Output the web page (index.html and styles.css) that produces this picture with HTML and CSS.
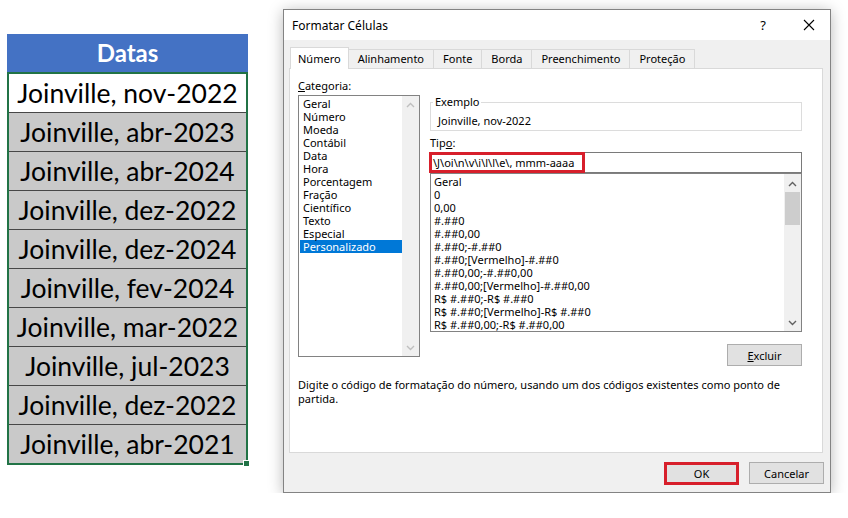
FILE: index.html
```html
<!DOCTYPE html>
<html lang="pt-BR">
<head>
    <meta charset="UTF-8">
    <title>Formatar Células</title>
    <link rel="stylesheet" href="styles.css">
</head>
<body>
    <div class="page">
        <div class="sheet">
            <div class="sheet-head">Datas</div>
            <div class="sheet-range">
                <div class="cell first">Joinville, nov-2022</div>
                <div class="cell">Joinville, abr-2023</div>
                <div class="cell">Joinville, abr-2024</div>
                <div class="cell">Joinville, dez-2022</div>
                <div class="cell">Joinville, dez-2024</div>
                <div class="cell">Joinville, fev-2024</div>
                <div class="cell">Joinville, mar-2022</div>
                <div class="cell">Joinville, jul-2023</div>
                <div class="cell">Joinville, dez-2022</div>
                <div class="cell">Joinville, abr-2021</div>
                <span class="fill-handle"></span>
            </div>
        </div>

        <div class="dialog">
            <div class="titlebar">
                <span class="title">Formatar Células</span>
                <span class="help">?</span>
                <span class="close">
                    <svg width="12" height="12" viewBox="0 0 12 12"><path d="M1 1L11 11M11 1L1 11" stroke="#000" stroke-width="1.1" fill="none"/></svg>
                </span>
            </div>

            <div class="dialog-body">
                <div class="tabs">
                    <div class="tab active">Número</div>
                    <div class="tab">Alinhamento</div>
                    <div class="tab">Fonte</div>
                    <div class="tab">Borda</div>
                    <div class="tab">Preenchimento</div>
                    <div class="tab">Proteção</div>
                </div>

                <div class="panel">
                    <div class="panel-top">
                        <div class="cat-col">
                            <div class="label"><u>C</u>ategoria:</div>
                            <div class="listbox cat-list">
                                <div class="items">
                                    <div class="item">Geral</div>
                                    <div class="item">Número</div>
                                    <div class="item">Moeda</div>
                                    <div class="item">Contábil</div>
                                    <div class="item">Data</div>
                                    <div class="item">Hora</div>
                                    <div class="item">Porcentagem</div>
                                    <div class="item">Fração</div>
                                    <div class="item">Científico</div>
                                    <div class="item">Texto</div>
                                    <div class="item">Especial</div>
                                    <div class="item selected">Personalizado</div>
                                </div>
                                <div class="scrollbar disabled">
                                    <svg class="arrow" width="9" height="6" viewBox="0 0 9 6"><path d="M1 5L4.5 1.5L8 5" stroke="currentColor" stroke-width="1.4" fill="none"/></svg>
                                    <svg class="arrow" width="9" height="6" viewBox="0 0 9 6"><path d="M1 1L4.5 4.5L8 1" stroke="currentColor" stroke-width="1.4" fill="none"/></svg>
                                </div>
                            </div>
                        </div>

                        <div class="main-col">
                            <fieldset class="sample">
                                <legend>Exemplo</legend>
                                <div class="sample-text">Joinville, nov-2022</div>
                            </fieldset>

                            <div class="label">Tip<u>o</u>:</div>
                            <div class="type-input">
                                <span>\J\oi\n\v\i\l\l\e\, mmm-aaaa</span>
                                <span class="mark"></span>
                            </div>

                            <div class="listbox fmt-list">
                                <div class="items">
                                    <div class="item">Geral</div>
                                    <div class="item">0</div>
                                    <div class="item">0,00</div>
                                    <div class="item">#.##0</div>
                                    <div class="item">#.##0,00</div>
                                    <div class="item">#.##0;-#.##0</div>
                                    <div class="item">#.##0;[Vermelho]-#.##0</div>
                                    <div class="item">#.##0,00;-#.##0,00</div>
                                    <div class="item">#.##0,00;[Vermelho]-#.##0,00</div>
                                    <div class="item">R$ #.##0;-R$ #.##0</div>
                                    <div class="item">R$ #.##0;[Vermelho]-R$ #.##0</div>
                                    <div class="item">R$ #.##0,00;-R$ #.##0,00</div>
                                </div>
                                <div class="scrollbar">
                                    <svg class="arrow" width="9" height="6" viewBox="0 0 9 6"><path d="M1 5L4.5 1.5L8 5" stroke="currentColor" stroke-width="1.4" fill="none"/></svg>
                                    <div class="thumb"></div>
                                    <svg class="arrow down" width="9" height="6" viewBox="0 0 9 6"><path d="M1 1L4.5 4.5L8 1" stroke="currentColor" stroke-width="1.4" fill="none"/></svg>
                                </div>
                            </div>

                            <div class="row-right">
                                <button class="btn"><u>E</u>xcluir</button>
                            </div>
                        </div>
                    </div>

                    <p class="hint">Digite o código de formatação do número, usando um dos códigos existentes como ponto de<br>partida.</p>
                </div>
            </div>

            <div class="footer">
                <button class="btn ok">OK</button>
                <button class="btn">Cancelar</button>
            </div>
        </div>
    </div>
</body>
</html>
```

FILE: styles.css
```css
body {
    margin: 0;
    background-color: #fff;
    font-family: 'Noto Sans', 'Liberation Sans', sans-serif;
    color: #000;
}

.page {
    display: flex;
    align-items: flex-start;
}

/* planilha */
.sheet {
    width: 241px;
    margin: 34px 0 0 7px;
}

.sheet-head {
    height: 38px;
    background-color: #4472c4;
    color: #fff;
    font-family: 'Lato', 'Liberation Sans', sans-serif;
    font-weight: bold;
    font-size: 24px;
    line-height: 38px;
    text-align: center;
}

.sheet-range {
    position: relative;
    border: 2px solid #217346;
}

.cell {
    height: 38px;
    line-height: 38px;
    border-bottom: 1px solid #474747;
    background-color: #c9c9c9;
    font-family: 'Lato', 'Liberation Sans', sans-serif;
    font-size: 26.5px;
    text-align: center;
    white-space: nowrap;
}

.cell.first {
    background-color: #fff;
}

.cell:last-of-type {
    border-bottom: none;
}

.fill-handle {
    position: absolute;
    right: -4px;
    bottom: -4px;
    width: 5px;
    height: 5px;
    background-color: #217346;
    border: 1px solid #fff;
}

/* janela */
.dialog {
    width: 548px;
    height: 484px;
    box-sizing: border-box;
    margin: 9px 0 0 35px;
    border: 1px solid #838383;
    background-color: #f0f0f0;
    box-shadow: 0 2px 14px rgba(0,0,0,0.28);
    font-size: 11px;
    display: flex;
    flex-direction: column;
}

.titlebar {
    height: 30px;
    background-color: #fff;
    display: flex;
    align-items: center;
    padding-left: 8px;
    font-size: 12px;
}

.title {
    flex: 1;
}

.help {
    width: 20px;
    text-align: center;
    font-size: 13px;
    margin-right: 30px;
}

.close {
    display: flex;
    margin-right: 15px;
}

.dialog-body {
    padding: 7px 7px 0 5px;
}

.tabs {
    display: flex;
    align-items: flex-end;
    height: 21px;
    padding-left: 1px;
}

.tab {
    height: 18px;
    line-height: 18px;
    padding: 0 9px;
    border: 1px solid #d9d9d9;
    border-bottom: none;
    border-left: none;
    background-color: #f0f0f0;
}

.tab.active {
    height: 21px;
    line-height: 22px;
    padding: 0 7px;
    margin-bottom: -1px;
    border-left: 1px solid #d9d9d9;
    background-color: #fff;
    position: relative;
    z-index: 1;
}

.panel {
    height: 385px;
    box-sizing: border-box;
    border: 1px solid #d9d9d9;
    background-color: #fff;
    padding: 10px 20px 0 8px;
}

.panel-top {
    display: flex;
    gap: 10px;
}

.label {
    line-height: 14px;
}

.listbox {
    display: flex;
    border: 1px solid #828282;
    background-color: #fff;
    overflow: hidden;
    box-sizing: border-box;
}

.items {
    flex: 1;
    padding: 1px 0 0 1px;
    white-space: nowrap;
    overflow: hidden;
}

.item {
    height: 13px;
    line-height: 13px;
    padding-left: 3px;
}

.item.selected {
    background-color: #0078d7;
    color: #fff;
}

.scrollbar {
    width: 17px;
    background-color: #f0f0f0;
    color: #606060;
    display: flex;
    flex-direction: column;
    align-items: center;
    justify-content: space-between;
    padding: 6px 0 5px;
    box-sizing: border-box;
}

.scrollbar.disabled {
    color: #bfbfbf;
}

.cat-list {
    width: 122px;
    height: 262px;
    margin-top: 2px;
}

.main-col {
    width: 372px;
    padding-top: 16px;
}

.sample {
    margin: 0;
    padding: 5px 7px 2px;
    border: 1px solid #dcdcdc;
    min-width: 0;
}

.sample legend {
    padding: 0 2px;
    margin-left: -5px;
    line-height: 14px;
}

.sample-text {
    line-height: 14px;
}

.main-col .label {
    margin-top: 5px;
}

.type-input {
    position: relative;
    height: 21px;
    box-sizing: border-box;
    margin-top: 2px;
    border: 1px solid #7a7a7a;
    padding-left: 2px;
    line-height: 19px;
    white-space: nowrap;
}

.type-input .mark {
    position: absolute;
    left: -2px;
    top: -1px;
    width: 156px;
    height: 21px;
    box-sizing: border-box;
    border: 3px solid #d71f2b;
}

.fmt-list {
    height: 159px;
    margin-top: 0;
}

.fmt-list .items {
    padding-left: 0;
}

.fmt-list .item {
    padding-left: 3px;
}

.fmt-list .scrollbar {
    justify-content: flex-start;
    padding-top: 7px;
}

.thumb {
    width: 15px;
    height: 33px;
    margin-top: 5px;
    background-color: #cdcdcd;
}

.fmt-list .arrow.down {
    margin-top: auto;
}

.row-right {
    display: flex;
    justify-content: flex-end;
    margin-top: 12px;
}

.btn {
    width: 75px;
    height: 22px;
    padding: 0;
    border: 1px solid #adadad;
    background-color: #e1e1e1;
    font-family: inherit;
    font-size: 11px;
    color: #000;
}

.hint {
    margin: 12px 0 0;
    line-height: 14px;
}

.footer {
    display: flex;
    justify-content: flex-end;
    align-items: flex-start;
    gap: 10px;
    padding: 9px 6px 0 0;
}

.btn.ok {
    height: 23px;
    border: 3px solid #d71f2b;
}
```
